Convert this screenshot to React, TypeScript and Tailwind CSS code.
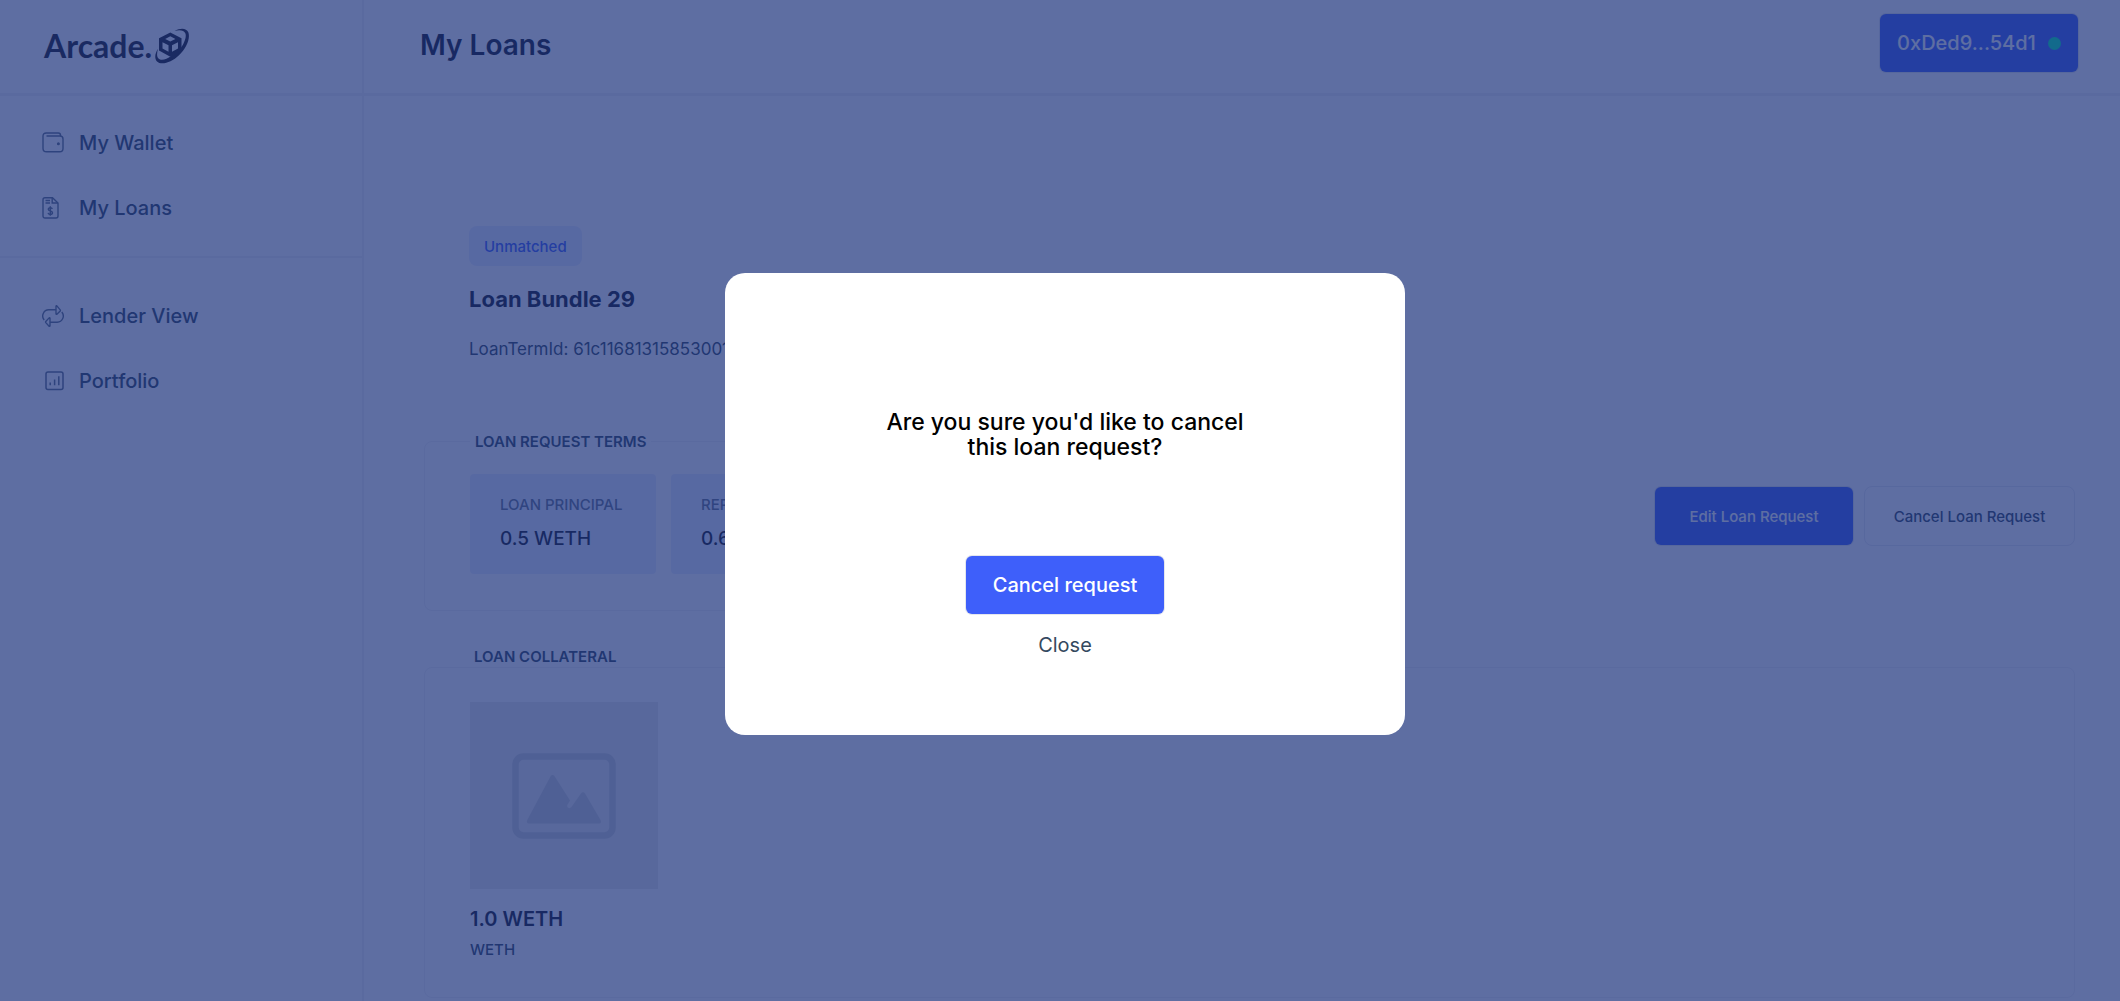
import type { ReactNode } from 'react'

const navGroups = [
  [
    { label: 'My Wallet', icon: <WalletIcon /> },
    { label: 'My Loans', icon: <LoanIcon /> },
  ],
  [
    { label: 'Lender View', icon: <SwapIcon /> },
    { label: 'Portfolio', icon: <ChartIcon /> },
  ],
]

const terms = [
  { label: 'LOAN PRINCIPAL', value: '0.5 WETH' },
  { label: 'REPAYMENT', value: '0.6 WETH' },
]

function WalletIcon() {
  return (
    <svg width="22" height="22" viewBox="0 0 22 22" fill="none" stroke="currentColor" strokeWidth="1.4" aria-hidden="true">
      <path d="M18.5 4V3.2C18.5 1.8 17.6 1 16.4 1H4.2C2.2 1 1 2.3 1 4v12.2C1 18.4 2.4 19.8 4.5 19.8h13.2c2 0 3.3-1.3 3.3-3.3V7c0-2-1.2-3-3-3H4.5" />
      <circle cx="16.4" cy="11.8" r="0.8" fill="currentColor" />
    </svg>
  )
}

function LoanIcon() {
  return (
    <svg width="22" height="22" viewBox="0 0 22 22" fill="none" stroke="currentColor" strokeWidth="1.4" aria-hidden="true">
      <path d="M3 .8h7.5L16 6v13c0 1.2-.8 2-2 2H3c-1.3 0-2-.8-2-2V2.8C1 1.6 1.8.8 3 .8Z" />
      <path d="M10.2 1v5H16M3.5 3.5H8M3.5 6H8" />
      <path d="M10.3 12c-.3-1-1.2-1.4-2.2-1.3-1.1.1-1.9.7-1.8 1.7.2 2 4.2 1.2 4.2 3.4 0 1.1-1 1.7-2.2 1.7-1.1 0-2-.5-2.3-1.6M8.3 9.2v9.6" />
    </svg>
  )
}

function SwapIcon() {
  return (
    <svg width="22" height="22" viewBox="0 0 22 22" fill="none" stroke="currentColor" strokeWidth="1.4" aria-hidden="true">
      <path d="M2.2 15A6.2 6.2 0 0 1 6.8 4.8H14M19.8 7a6.2 6.2 0 0 1-4.6 10.2H8" />
      <path d="M14 1.2c0-.6.5-.7.9-.3l3.3 4c.3.4.3.7 0 1.100l-3.3 3.2c-.4.4-.9.2-.9-.4V1.2Z" />
      <path d="M8 13.2c0-.6-.5-.7-.9-.3l-3.3 3.6c-.3.4-.3.7 0 1.1l3.3 3.6c.4.4.9.2.9-.4v-7.6Z" />
    </svg>
  )
}

function ChartIcon() {
  return (
    <svg width="22" height="22" viewBox="0 0 22 22" fill="none" stroke="currentColor" strokeWidth="1.5" aria-hidden="true">
      <rect x="4" y="2" width="17" height="17.4" rx="2" />
      <path d="M8.2 12.6v2.6M12.6 9.6v5.6M16.8 6.2v9" />
    </svg>
  )
}

/* cube with a ring that runs behind its top right and in front of its base */
function PlanetMark() {
  return (
    <svg width="36" height="36" viewBox="0 0 36 36" aria-hidden="true">
      <path fill="currentColor" d="M16.3 4.500 27.500 10.200V22.500L16.300 28.800 5 22.500V10.200Z" />
      <g fill="#fff">
        <path d="M16.3 8.200 21.400 10.900 16.300 13.500 11.200 10.900Z" />
        <path d="M8.500 14.200 14.500 17.300V23.800L8.500 20.400Z" />
        <path d="M24 14.200 18 17.300V23.800L24 20.400Z" />
      </g>
      <path
        fill="currentColor"
        d="M20.5 3C26.5-.4 32.5-.1 34.300 4.300c2.300 6-2 16-9.300 23C17.300 34.800 7 37.500 3 33.400.3 30.600.8 25.800 4 20.800c-1.300 4.600-1.300 8 .5 9.700 2.600 2.500 8 1 12.800-2.700l8.500-6.500c4.700-6 7-12.800 5.500-16C30 2.300 25.700 1.600 20.500 3Z"
      />
    </svg>
  )
}

function ImagePlaceholder() {
  return (
    <div className="flex h-[187px] w-[188px] items-center justify-center bg-[#e9eae9] text-[#cdcfd3]">
      <svg width="104" height="86" viewBox="0 0 104 86" fill="none" aria-hidden="true">
        <rect x="3.5" y="3.5" width="97" height="79" rx="8" stroke="currentColor" strokeWidth="6.5" />
        <path
          fill="currentColor"
          d="M38.5 23.5c1-2 3-2 4.2 0L58 47.5l-2.5 4c-1.5 3 2 5 4 2.5L69 40.5c1.2-1.6 2.8-1.6 4 0L88.5 67c1 2 .5 3.5-1.5 3.5H17c-2 0-2.7-1.5-1.7-3.5Z"
        />
      </svg>
    </div>
  )
}

function PrimaryButton({ children, className = '' }: { children: ReactNode; className?: string }) {
  return (
    <button type="button" className={`h-[58px] w-[198px] rounded-md bg-[#3e5ffa] font-medium text-white ring-1 ring-[#e4e6ee] ${className}`}>
      {children}
    </button>
  )
}

function Sidebar() {
  return (
    <aside className="w-[364px] shrink-0 border-r-2 border-[#f1f1f5]">
      <a href="#home" className="flex h-24 items-center gap-[2px] border-b-[3px] border-[#f1f1f5] pb-px pl-11 text-[#1c1c2a]">
        <span className="font-['Lato'] text-[32px] leading-8 font-bold">Arcade.</span>
        <PlanetMark />
      </a>
      <nav>
        {navGroups.map((group, i) => (
          <ul key={i} className={i === 0 ? 'border-b-2 border-[#f1f1f5] pt-[14px] pb-4' : 'pt-[25px]'}>
            {group.map((item) => (
              <li key={item.label}>
                <a href="#view" className="flex h-[65px] items-center gap-[15px] pl-[42px] text-xl font-medium text-[#34495e]">
                  <span className="text-[#5f6f85]">{item.icon}</span>
                  {item.label}
                </a>
              </li>
            ))}
          </ul>
        ))}
      </nav>
    </aside>
  )
}

function Header() {
  return (
    <header className="flex h-24 items-center justify-between border-b-[3px] border-[#f1f1f5] pr-[42px] pb-[3px] pl-14">
      <h1 className="text-[28px] leading-8 font-semibold">My Loans</h1>
      <PrimaryButton className="mb-1 flex items-center justify-center gap-3 text-xl">
        0xDed9...54d1
        <span className="size-[13px] rounded-full bg-[#00f0b4]" />
      </PrimaryButton>
    </header>
  )
}

function LoanDetails() {
  return (
    <section className="pt-[130px] pr-[45px] pl-[60px]">
      <div className="pl-[45px]">
        <span className="inline-flex h-10 items-center rounded-lg bg-[#e8eeff] px-[15px] pt-0.5 text-[15px] font-medium text-[#3e5ffa]">
          Unmatched
        </span>
        <h2 className="mt-[19px] text-[22px] leading-7 font-bold">Loan Bundle 29</h2>
        <p className="mt-[24px] text-[17px] leading-6 text-[#34495e]">LoanTermId: 61c11681315853001f2a</p>
      </div>

      <div className="mt-[69px] flex items-start justify-between">
        <fieldset className="h-[181px] w-[900px] rounded-lg border border-[#f0f0f4] pl-[45px]">
          <legend className="px-[5px] pt-0.5 text-[15px] leading-5 font-semibold text-[#34495e]">LOAN REQUEST TERMS</legend>
          <dl className="mt-[22px] flex gap-[15px]">
            {terms.map((t) => (
              <div key={t.label} className="h-[100px] w-[186px] rounded bg-[#e8eeff] pt-[21px] pl-[30px]">
                <dt className="text-[15px] leading-5 font-medium text-[#64748c]">{t.label}</dt>
                <dd className="mt-3 text-[19px] leading-6 font-medium">{t.value}</dd>
              </div>
            ))}
          </dl>
        </fieldset>
        <div className="mt-[56px] flex items-center gap-[11px]">
          <PrimaryButton className="pt-0.5 text-[15px]">Edit Loan Request</PrimaryButton>
          <button
            type="button"
            className="h-[60px] w-[211px] rounded-lg border border-[#e8e9f0] pt-0.5 text-[15px] font-medium text-[#34495e]"
          >
            Cancel Loan Request
          </button>
        </div>
      </div>

      <h3 className="mt-[36px] pl-[50px] text-[15px] leading-5 font-semibold text-[#34495e]">LOAN COLLATERAL</h3>
      <div className="h-[331px] rounded-lg border border-[#f0f0f4] pt-[34px] pl-[45px]">
        <ImagePlaceholder />
        <p className="mt-[18px] text-xl leading-6 font-semibold">1.0 WETH</p>
        <p className="mt-[9px] text-[15px] leading-5 font-medium text-[#34495e]">WETH</p>
      </div>
    </section>
  )
}

function CancelDialog() {
  return (
    <div className="fixed inset-0 flex items-center justify-center bg-[#19307a]/70 pt-[6px] pl-[10px]">
      <div
        role="dialog"
        aria-modal="true"
        aria-labelledby="cancel-title"
        className="flex h-[462px] w-[680px] flex-col items-center rounded-[20px] bg-white pt-[137px] text-black"
      >
        <h2 id="cancel-title" className="w-[380px] text-center text-[23px] leading-[25px] font-medium">
          Are you sure you'd like to cancel this loan request?
        </h2>
        <PrimaryButton className="mt-[96px] text-xl">Cancel request</PrimaryButton>
        <button type="button" className="mt-[19px] text-xl leading-6 text-[#34495e]">
          Close
        </button>
      </div>
    </div>
  )
}

export default function App() {
  return (
    <div className="h-screen overflow-hidden bg-white font-['Inter',sans-serif] text-[#16192c]">
      <div className="flex min-h-full">
        <Sidebar />
        <main className="min-w-0 flex-1">
          <Header />
          <LoanDetails />
        </main>
      </div>
      <CancelDialog />
    </div>
  )
}
